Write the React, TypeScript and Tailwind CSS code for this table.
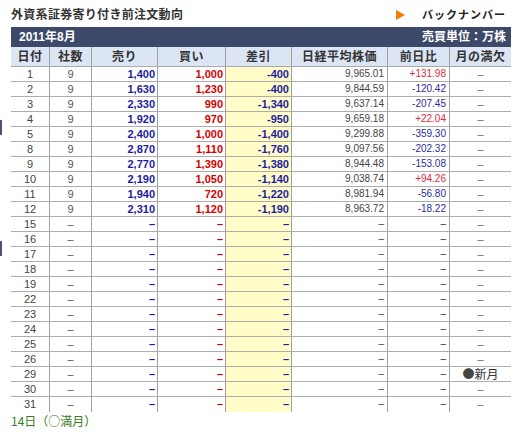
const rows: [string, string, string, string, string, string, string, string][] = [
  ["1", "9", "1,400", "1,000", "-400", "9,965.01", "+131.98", "-"],
  ["2", "9", "1,630", "1,230", "-400", "9,844.59", "-120.42", "-"],
  ["3", "9", "2,330", "990", "-1,340", "9,637.14", "-207.45", "-"],
  ["4", "9", "1,920", "970", "-950", "9,659.18", "+22.04", "-"],
  ["5", "9", "2,400", "1,000", "-1,400", "9,299.88", "-359.30", "-"],
  ["8", "9", "2,870", "1,110", "-1,760", "9,097.56", "-202.32", "-"],
  ["9", "9", "2,770", "1,390", "-1,380", "8,944.48", "-153.08", "-"],
  ["10", "9", "2,190", "1,050", "-1,140", "9,038.74", "+94.26", "-"],
  ["11", "9", "1,940", "720", "-1,220", "8,981.94", "-56.80", "-"],
  ["12", "9", "2,310", "1,120", "-1,190", "8,963.72", "-18.22", "-"],
  ...["15", "16", "17", "18", "19", "22", "23", "24", "25", "26", "29", "30", "31"].map(
    (d) =>
      [d, "–", "–", "–", "–", "–", "–", d === "29" ? "●新月" : "-"] as [
        string, string, string, string, string, string, string, string
      ]
  ),
];

const cols = "grid grid-cols-[39px_42px_66px_68px_66px_96px_62px_61px]";
const heads = ["日付", "社数", "売り", "買い", "差引", "日経平均株価", "前日比", "月の満欠"];
const cjk = { fontFamily: '"Noto Sans CJK JP", sans-serif' };

export default function App() {
  return (
    <div
      className="relative w-[519px] h-[432px] bg-white overflow-hidden text-[#333]"
      style={{ fontFamily: '"Liberation Sans", "Noto Sans CJK JP", sans-serif' }}
    >
      <div className="absolute left-0 top-[120px] w-[2px] h-[15px] bg-[#4a5570]" />
      <div className="absolute left-0 top-[241px] w-[2px] h-[15px] bg-[#4a5570]" />

      <div className="ml-[11px] w-[500px]">
        <div className="flex items-center justify-between h-[27px] pt-[3px]">
          <span className="text-[12px] font-bold tracking-[0.3px] text-[#333]">外資系証券寄り付き前注文動向</span>
          <span className="flex items-center pr-[5px]">
            <svg width="9" height="10" viewBox="0 0 9 10" className="mr-[17px]">
              <polygon points="0,0 9,5 0,10" fill="#f07d00" />
            </svg>
            <span className="text-[11px] font-bold tracking-[1px] text-[#222]">バックナンバー</span>
          </span>
        </div>

        <div className="flex items-center justify-between h-[20px] bg-[#3c4968] px-[8px] pr-[5px] text-white text-[12px] font-bold">
          <span>2011年8月</span>
          <span>売買単位：万株</span>
        </div>

        <div className={`${cols} h-[20px] bg-[#dbe5f3] border-b border-[#a9a9a9] text-[12px] font-bold text-[#333]`}>
          {heads.map((h, i) => (
            <div
              key={h}
              className={`flex items-center justify-center tracking-[0.5px] ${i < 7 ? "border-r border-[#a0a0a0]" : ""}`}
            >
              {h}
            </div>
          ))}
        </div>

        {rows.map((r, ri) => {
          const last = ri === rows.length - 1;
          const chg = r[6];
          return (
            <div
              key={r[0]}
              className={`${cols} h-[15px] ${last ? "" : "border-b border-[#adadad]"} text-[11px] leading-[14px]`}
            >
              <div className="border-r border-[#a0a0a0] text-center text-[#444]">{r[0]}</div>
              <div className="border-r border-[#a0a0a0] text-center text-[#555]">{r[1]}</div>
              <div className="border-r border-[#a0a0a0] text-right pr-[2px] font-bold text-[#1c1ca0]">{r[2]}</div>
              <div className="border-r border-[#a0a0a0] text-right pr-[2px] font-bold text-[#d40000]">{r[3]}</div>
              <div className="border-r border-[#a0a0a0] text-right pr-[2px] font-bold text-[#1c1ca0] bg-[#fffcc8]">{r[4]}</div>
              <div className="border-r border-[#a0a0a0] text-right pr-[3px] text-[10px] text-[#444]">{r[5]}</div>
              <div
                className={`border-r border-[#a0a0a0] text-right pr-[3px] text-[10px] ${
                  chg.startsWith("+") ? "text-[#e0283a]" : chg === "–" ? "text-[#333]" : "text-[#2a2a9a]"
                }`}
              >
                {chg}
              </div>
              {r[7] === "-" ? (
                <div className="text-center text-[#666]">–</div>
              ) : (
                <div className="text-center text-[12px] text-[#333] leading-[14px]" style={cjk}>
                  <span className="text-[#444]">●</span>新月
                </div>
              )}
            </div>
          );
        })}

        <div className="h-[18px] flex items-center text-[12px] text-[#3a7a22]" style={cjk}>
          14日（○満月）
        </div>
      </div>
    </div>
  );
}
